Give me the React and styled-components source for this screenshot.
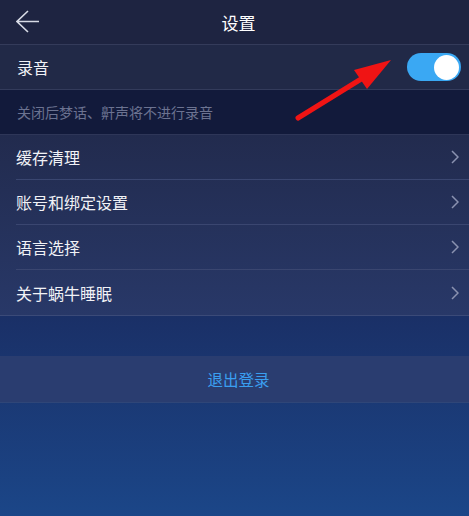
import React from "react";
import styled, { createGlobalStyle } from "styled-components";

const Global = createGlobalStyle`
  html, body { margin: 0; padding: 0; }
  body {
    font-family: "Noto Sans CJK SC", "Noto Sans", sans-serif;
    background: #1b4688;
  }
`;

const Page = styled.div`
  position: relative;
  width: 469px;
  height: 516px;
  overflow: hidden;
  display: flex;
  flex-direction: column;
  background: linear-gradient(180deg, #1b2a5e 0%, #1a2f66 60%, #1b4688 100%);
`;

const Header = styled.div`
  height: 44px;
  display: flex;
  align-items: center;
  justify-content: center;
  position: relative;
  background: #1e2441;
  border-bottom: 1px solid #343b5a;
`;

const BackBtn = styled.div`
  position: absolute;
  left: 16px;
  top: 10px;
  width: 24px;
  height: 24px;
`;

const Title = styled.div`
  color: #ffffff;
  font-size: 17px;
  padding-left: 8px;
`;

const SwitchRow = styled.div`
  height: 44px;
  display: flex;
  align-items: center;
  justify-content: space-between;
  padding: 0 8px 0 17px;
  background: #212947;
  border-bottom: 1px solid #333b5b;
`;

const Label = styled.div`
  color: #f1f2f6;
  font-size: 16px;
`;

const Toggle = styled.div`
  width: 54px;
  height: 28px;
  border-radius: 14px;
  background: #3aa8f3;
  display: flex;
  align-items: center;
  justify-content: flex-end;
  padding: 0 2px;
  box-sizing: border-box;
`;

const Knob = styled.div`
  width: 25px;
  height: 25px;
  border-radius: 50%;
  background: #ffffff;
`;

const Hint = styled.div`
  height: 44px;
  display: flex;
  align-items: center;
  padding-left: 17px;
  background: #121a3b;
  color: #6c7391;
  font-size: 14px;
  border-bottom: 1px solid #2e3658;
`;

const List = styled.div`
  background: linear-gradient(180deg, #222b4e 0%, #283868 100%);
  border-bottom: 1px solid #3b4a78;
`;

const Item = styled.div`
  box-sizing: border-box;
  height: 45px;
  margin-left: 16px;
  padding-right: 10px;
  display: flex;
  align-items: center;
  justify-content: space-between;
  border-bottom: ${(p) => (p.$last ? "none" : "1px solid #3a4670")};
`;

const Gap = styled.div`
  height: 40px;
`;

const Logout = styled.div`
  height: 46px;
  display: flex;
  align-items: center;
  justify-content: center;
  padding-left: 8px;
  background: #2a3d70;
  color: #3a9ff0;
  font-size: 15.5px;
  border-bottom: 1px solid #2f4678;
`;

const Arrow = styled.svg`
  position: absolute;
  left: 0;
  top: 0;
  pointer-events: none;
`;

const Chevron = () => (
  <svg width="8" height="14" viewBox="0 0 8 14">
    <path d="M1 1 L7 7 L1 13" fill="none" stroke="#8a92b0" strokeWidth="1.5" />
  </svg>
);

const items = ["缓存清理", "账号和绑定设置", "语言选择", "关于蜗牛睡眠"];

export default function App() {
  return (
    <>
      <Global />
      <Page>
        <Header>
          <BackBtn>
            <svg width="24" height="24" viewBox="0 0 24 24">
              <path
                d="M1 11.5 H23 M12 1 L1 11.5 L12 22"
                fill="none"
                stroke="#d8dbe6"
                strokeWidth="1.6"
              />
            </svg>
          </BackBtn>
          <Title>设置</Title>
        </Header>
        <SwitchRow>
          <Label>录音</Label>
          <Toggle>
            <Knob />
          </Toggle>
        </SwitchRow>
        <Hint>关闭后梦话、鼾声将不进行录音</Hint>
        <List>
          {items.map((t, i) => (
            <Item key={t} $last={i === items.length - 1}>
              <Label>{t}</Label>
              <Chevron />
            </Item>
          ))}
        </List>
        <Gap />
        <Logout>退出登录</Logout>
        <Arrow width="469" height="516" viewBox="0 0 469 516">
          <line x1="298" y1="118" x2="366" y2="76" stroke="#f01414" strokeWidth="5" strokeLinecap="round" />
          <polygon points="391,60 354,70 367,89" fill="#f01414" />
        </Arrow>
      </Page>
    </>
  );
}
